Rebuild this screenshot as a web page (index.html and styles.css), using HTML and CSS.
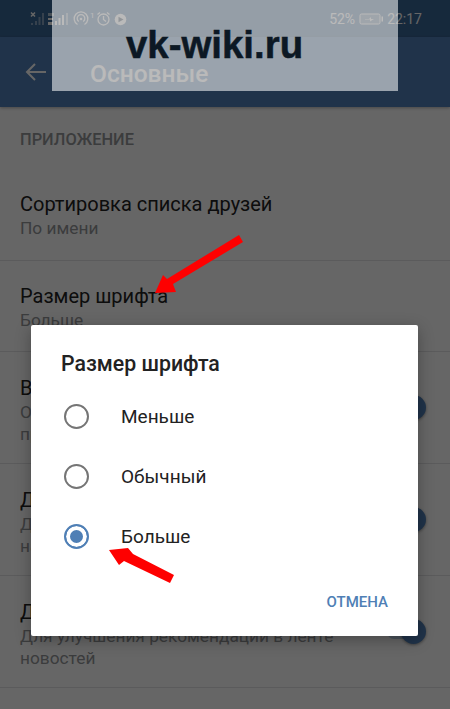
FILE: index.html
```html
<!DOCTYPE html>
<html lang="ru">
<head>
  <meta charset="UTF-8">
  <meta name="viewport" content="width=device-width, initial-scale=1.0">
  <title>Основные</title>
  <link rel="stylesheet" href="styles.css">
</head>
<body>
  <div class="screen">
    <div class="statusbar">
      <div class="status-icons">
        <svg width="100" height="20" viewBox="0 0 100 20">
          <!-- sim 1 -->
          <path d="M1 3.500l4 4M5 3.500l-4 4" stroke="#fff" stroke-width="1.500"/>
          <g fill="#fff" opacity=".4">
            <rect x="1" y="14" width="2" height="2"/>
            <rect x="5" y="12" width="2" height="4"/>
            <rect x="8.500" y="8" width="2" height="8"/>
            <rect x="12" y="4" width="2" height="12"/>
          </g>
          <!-- sim 2 -->
          <g fill="#fff">
            <rect x="18" y="4" width="6" height="3" opacity=".6"/>
            <rect x="18" y="9" width="5" height="2"/>
            <rect x="18" y="13" width="5" height="3"/>
            <rect x="25" y="12" width="2" height="4"/>
            <rect x="28.500" y="9" width="2" height="7"/>
            <rect x="32" y="6" width="2" height="10"/>
            <rect x="36" y="4" width="2" height="12" opacity=".5"/>
          </g>
          <!-- hotspot -->
          <g fill="none" stroke="#fff" stroke-width="1.300">
            <path d="M47.500 15.500a6.800 6.800 0 1 1 7 0"/>
            <path d="M48.800 12.500a3.800 3.800 0 1 1 4.400 0"/>
          </g>
          <circle cx="51" cy="10" r="1.300" fill="#fff"/>
          <!-- alarm -->
          <g fill="none" stroke="#fff" stroke-width="1.300">
            <circle cx="73.500" cy="10.500" r="5.500"/>
            <path d="M73.500 7v3.500l2.500 2M67.500 5.500l2.500-2M79.500 5.500l-2.500-2"/>
          </g>
          <!-- play -->
          <circle cx="90.500" cy="10.500" r="5.800" fill="#fff"/>
          <path d="M88.500 7.800l5 2.700-5 2.700z" fill="#20344a"/>
        </svg>
        <span class="notif-count">1</span>
      </div>
      <div class="status-right">
        <span>52%</span>
        <svg width="24" height="12" viewBox="0 0 24 12">
          <rect x="1" y="1" width="20" height="10" rx="1.500" fill="#fff" fill-opacity=".25" stroke="#fff"/>
          <path d="M6 6h4l2-2v2h3l-4 2.500V6.500H6z" fill="#fff"/>
          <rect x="22.500" y="3.500" width="1.500" height="5" fill="#fff"/>
        </svg>
        <span>22:17</span>
      </div>
    </div>

    <div class="appbar">
      <svg class="back" width="22" height="20" viewBox="0 0 22 20">
        <path d="M21 10H2M10 2l-8 8 8 8" fill="none" stroke="#fff" stroke-width="2"/>
      </svg>
      <span class="appbar-title">Основные</span>
    </div>

    <div class="section-head">ПРИЛОЖЕНИЕ</div>

    <div class="row row-first">
      <div class="row-title">Сортировка списка друзей</div>
      <div class="row-sub">По имени</div>
    </div>
    <div class="row">
      <div class="row-title">Размер шрифта</div>
      <div class="row-sub">Больше</div>
    </div>
    <div class="row row-switch">
      <div class="row-text">
        <div class="row-title">Видео</div>
        <div class="row-sub">Открывать видео прямо в<br>приложении</div>
      </div>
      <div class="switch"></div>
    </div>
    <div class="row row-switch">
      <div class="row-text">
        <div class="row-title">Данные</div>
        <div class="row-sub">Для улучшения работы приложения<br>наряду с анализом</div>
      </div>
      <div class="switch"></div>
    </div>
    <div class="row row-switch">
      <div class="row-text">
        <div class="row-title">Данные о местоположении</div>
        <div class="row-sub">Для улучшения рекомендации в ленте<br>новостей</div>
      </div>
      <div class="switch"></div>
    </div>

    <div class="scrim"></div>

    <div class="dialog">
      <div class="dialog-title">Размер шрифта</div>
      <div class="option"><span class="radio"></span>Меньше</div>
      <div class="option"><span class="radio"></span>Обычный</div>
      <div class="option"><span class="radio radio-on"></span>Больше</div>
      <div class="dialog-actions"><span class="dialog-btn">ОТМЕНА</span></div>
    </div>

    <svg class="arrows" width="450" height="709" viewBox="0 0 450 709">
      <path d="M243 242L173 284L176 292L155 293L163 275L167 279L239 235z" fill="#fe0000"/>
      <path d="M174 575L133 554L128 548L109 550L119 565L124 561L170 583z" fill="#fe0000"/>
    </svg>

    <div class="watermark">vk-wiki.ru</div>
  </div>
</body>
</html>
```

FILE: styles.css
```css
* {
  box-sizing: border-box;
}
body {
  margin: 0;
  font-family: Roboto, "Noto Sans", sans-serif;
  background-color: #fff;
}
.screen {
  position: relative;
  width: 450px;
  height: 709px;
  overflow: hidden;
}
.statusbar {
  height: 37px;
  padding: 0 28px 0 30px;
  display: flex;
  justify-content: space-between;
  align-items: center;
  background-color: #396696;
  color: #fff;
}
.status-icons {
  position: relative;
  display: flex;
  height: 20px;
}
.notif-count {
  position: absolute;
  left: 60px;
  top: 2px;
  font-size: 8px;
  line-height: 9px;
  color: #fff;
}
.status-right {
  display: flex;
  align-items: center;
  gap: 4px;
  font-size: 14px;
}
.appbar {
  height: 70px;
  padding-left: 25px;
  display: flex;
  align-items: center;
  background-color: #5181b8;
  box-shadow: 0 1px 3px rgba(0, 0, 0, .3);
  color: #fff;
}
.back {
  margin-right: 43px;
}
.appbar-title {
  font-size: 24.500px;
  font-weight: 500;
  padding-top: 3px;
}
.section-head {
  padding: 24px 20px 0;
  height: 66px;
  font-size: 16.400px;
  line-height: 18px;
  font-weight: 500;
  color: #939699;
}
.row {
  min-height: 91px;
  padding: 22px 20px 0;
  border-bottom: 1px solid #e3e4e6;
}
.row-first {
  min-height: 88px;
  padding-top: 18px;
}
.row-switch {
  min-height: 112px;
  padding-top: 0;
  display: flex;
  justify-content: space-between;
  align-items: center;
}
.row-text {
  margin-top: 4px;
}
.row-title {
  font-size: 20px;
  line-height: 26px;
  color: #222;
}
.row-sub {
  font-size: 17.300px;
  line-height: 22px;
  color: #939699;
}
.switch {
  position: relative;
  flex: none;
  width: 36px;
  height: 14px;
  margin-right: 7px;
  border-radius: 7px;
  background-color: #bcd0e6;
}
.switch::after {
  content: "";
  position: absolute;
  right: -3px;
  top: -5.500px;
  width: 25px;
  height: 25px;
  border-radius: 50%;
  background-color: #5181b8;
  box-shadow: 0 1px 3px rgba(0, 0, 0, .4);
}
.scrim {
  position: absolute;
  left: 0;
  top: 0;
  right: 0;
  bottom: 0;
  background-color: rgba(0, 0, 0, .6);
}
.dialog {
  position: absolute;
  left: 31px;
  top: 325px;
  width: 387px;
  height: 311px;
  padding: 24px 30px 0;
  display: flex;
  flex-direction: column;
  background-color: #fff;
  border-radius: 2px;
  box-shadow: 0 4px 16px rgba(0, 0, 0, .3);
}
.dialog-title {
  font-size: 21.300px;
  line-height: 30px;
  font-weight: 500;
  color: #222;
  margin-bottom: 7px;
}
.option {
  height: 60px;
  display: flex;
  align-items: center;
  font-size: 19px;
  color: #222;
}
.radio {
  width: 25px;
  height: 25px;
  margin: 0 32px 0 3px;
  border: 2.500px solid #757575;
  border-radius: 50%;
}
.radio-on {
  border-color: #4f7fb5;
  background-color: #4f7fb5;
  box-shadow: inset 0 0 0 4px #fff;
}
.dialog-actions {
  margin-top: auto;
  padding-bottom: 25px;
  display: flex;
  justify-content: flex-end;
}
.dialog-btn {
  font-size: 15px;
  line-height: 18px;
  font-weight: 500;
  color: #4f7fb5;
}
.arrows {
  position: absolute;
  left: 0;
  top: 0;
}
.watermark {
  position: absolute;
  left: 52px;
  top: 0;
  width: 346px;
  height: 91px;
  padding: 22px 0 0 74px;
  background-color: rgba(255, 255, 255, .55);
  font-family: "Liberation Sans", sans-serif;
  font-size: 38.400px;
  line-height: 45px;
  font-weight: 700;
  -webkit-text-stroke: .5px #0c1824;
  color: #0c1824;
}
```
